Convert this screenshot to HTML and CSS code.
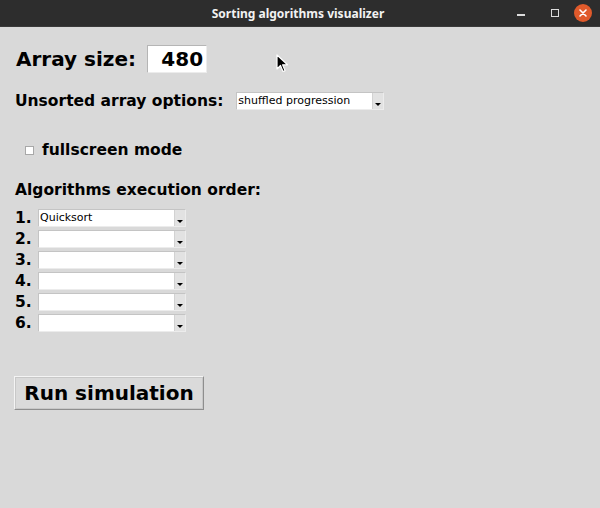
FILE: index.html
```html
<!DOCTYPE html>
<html>
<head>
<meta charset="utf-8">
<link rel="stylesheet" href="styles.css">
</head>
<body>
<div class="window">
  <div class="titlebar">
    <span class="title">Sorting algorithms visualizer</span>
    <div class="controls">
      <span class="ctl min"></span>
      <span class="ctl max"></span>
      <span class="ctl close">
        <svg width="18" height="18" viewBox="0 0 18 18"><circle cx="9" cy="9" r="9" fill="#e05a2b"/><path d="M6 6 L12 12 M12 6 L6 12" stroke="#fff" stroke-width="1.6" stroke-linecap="round"/></svg>
      </span>
    </div>
  </div>
  <div class="content">
    <div class="row size-row">
      <span class="big-label">Array size:</span>
      <div class="entry">480</div>
    </div>
    <div class="row options-row">
      <span class="label">Unsorted array options:</span>
      <div class="combo"><span class="combo-text">shuffled progression</span><span class="combo-btn"><span class="arrow"></span></span></div>
    </div>
    <div class="row check-row">
      <span class="checkbox"></span>
      <span class="label">fullscreen mode</span>
    </div>
    <div class="label heading">Algorithms execution order:</div>
    <div class="order">
      <div class="order-row"><span class="label num">1.</span><div class="combo"><span class="combo-text">Quicksort</span><span class="combo-btn"><span class="arrow"></span></span></div></div>
      <div class="order-row"><span class="label num">2.</span><div class="combo"><span class="combo-text"></span><span class="combo-btn"><span class="arrow"></span></span></div></div>
      <div class="order-row"><span class="label num">3.</span><div class="combo"><span class="combo-text"></span><span class="combo-btn"><span class="arrow"></span></span></div></div>
      <div class="order-row"><span class="label num">4.</span><div class="combo"><span class="combo-text"></span><span class="combo-btn"><span class="arrow"></span></span></div></div>
      <div class="order-row"><span class="label num">5.</span><div class="combo"><span class="combo-text"></span><span class="combo-btn"><span class="arrow"></span></span></div></div>
      <div class="order-row"><span class="label num">6.</span><div class="combo"><span class="combo-text"></span><span class="combo-btn"><span class="arrow"></span></span></div></div>
    </div>
    <button class="run">Run simulation</button>
  </div>
  <svg class="cursor" width="13" height="19" viewBox="0 0 13 19"><path d="M1 1 L1 15 L4.5 11.5 L7 17.5 L9 16.6 L6.6 10.8 L11.5 10.8 Z" fill="#000" stroke="#fff" stroke-width="1.2" stroke-linejoin="round"/></svg>
</div>
</body>
</html>
```
FILE: styles.css
```css
html, body {
  margin: 0;
  padding: 0;
}
body {
  width: 600px;
  height: 508px;
  overflow: hidden;
  background: #d9d9d9;
}
.window {
  position: relative;
  width: 600px;
  height: 508px;
  background: #d9d9d9;
  font-family: "DejaVu Sans", sans-serif;
  color: #000;
}
.titlebar {
  height: 27px;
  background: #2d2d2d;
  display: grid;
  grid-template-columns: 1fr auto 1fr;
  align-items: center;
  border-bottom: 1px solid #3a3a3a;
  box-sizing: border-box;
}
.title {
  grid-column: 2;
  color: #f2f2f2;
  font-family: "Noto Sans", sans-serif;
  font-weight: 700;
  font-size: 12px;
  margin-right: 4px;
}
.controls {
  grid-column: 3;
  justify-self: end;
  display: flex;
  align-items: center;
  gap: 0;
  padding-right: 8px;
}
.ctl {
  display: flex;
  align-items: center;
  justify-content: center;
}
.min {
  width: 8px;
  height: 2px;
  background: #dcdcdc;
  margin-right: 26px;
  margin-top: 3px;
}
.max {
  width: 6px;
  height: 6px;
  border: 1.5px solid #dcdcdc;
  margin-right: 15px;
}
.close svg {
  display: block;
}
.content {
  padding-left: 15px;
}
.row {
  display: flex;
  align-items: center;
}
.size-row {
  margin-top: 18px;
  height: 28px;
  padding-left: 1px;
}
.big-label {
  font-weight: 700;
  font-size: 20px;
}
.entry {
  margin-left: 11px;
  width: 60px;
  height: 28px;
  box-sizing: border-box;
  background: #fff;
  border-top: 1px solid #b5b5b5;
  border-left: 1px solid #b5b5b5;
  border-right: 1px solid #ececec;
  border-bottom: 1px solid #ececec;
  font-weight: 700;
  font-size: 20px;
  text-align: right;
  padding-right: 3px;
  line-height: 26px;
}
.label {
  font-weight: 700;
  font-size: 15.5px;
  line-height: 18px;
}
.options-row {
  margin-top: 19px;
  height: 18px;
}
.options-row .combo {
  margin-left: 13px;
}
.combo {
  width: 148px;
  height: 18px;
  box-sizing: border-box;
  background: #fff;
  border-top: 1px solid #c4c4c4;
  border-left: 1px solid #c4c4c4;
  border-right: 1px solid #ececec;
  border-bottom: 1px solid #ececec;
  display: flex;
}
.combo-text {
  flex: 1;
  font-size: 11px;
  line-height: 16px;
  padding-left: 1px;
  font-family: "DejaVu Sans", sans-serif;
}
.combo-btn {
  width: 11px;
  background: #e2e2e2;
  border-left: 1px solid #d2d2d2;
  display: flex;
  align-items: flex-end;
  justify-content: center;
  padding-bottom: 3px;
  box-sizing: border-box;
}
.arrow {
  width: 0;
  height: 0;
  border-left: 3px solid transparent;
  border-right: 3px solid transparent;
  border-top: 3px solid #000;
  position: relative;
}
.check-row {
  margin-top: 31px;
  height: 18px;
  padding-left: 10px;
}
.checkbox {
  width: 9px;
  height: 9px;
  box-sizing: border-box;
  background: #fff;
  border: 1px solid #a8a8a8;
  margin-right: 8px;
}
.heading {
  margin-top: 22px;
}
.order {
  margin-top: 10px;
  display: flex;
  flex-direction: column;
  gap: 3px;
}
.order-row {
  display: flex;
  align-items: center;
  height: 18px;
}
.num {
  width: 23px;
}
.run {
  margin-top: 44px;
  margin-left: -1px;
  width: 190px;
  height: 34px;
  box-sizing: border-box;
  background: #dadada;
  border-top: 1px solid #f4f4f4;
  border-left: 1px solid #f4f4f4;
  border-right: 1px solid #8e8e8e;
  border-bottom: 1px solid #8e8e8e;
  box-shadow: inset 0 0 0 1px #c8c8c8;
  font-family: "DejaVu Sans", sans-serif;
  font-weight: 700;
  font-size: 20px;
  color: #000;
  padding: 0;
  display: block;
}
.cursor {
  position: absolute;
  left: 276px;
  top: 54px;
}
```
